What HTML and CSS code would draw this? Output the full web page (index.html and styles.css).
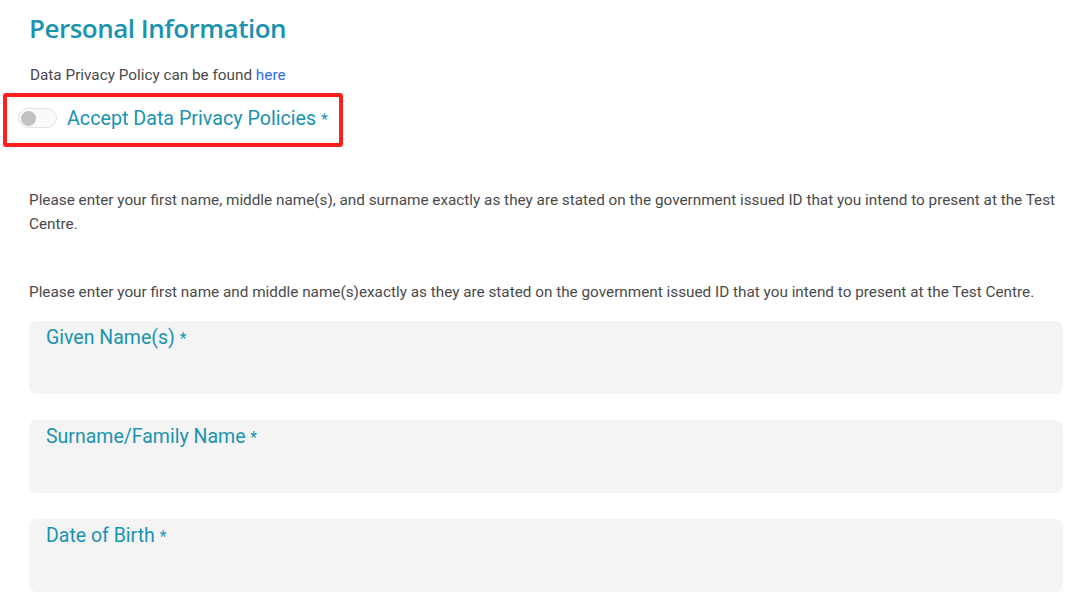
FILE: index.html
```html
<!DOCTYPE html>
<html lang="en">
    <head>
        <link rel="stylesheet" href="styles.css">
    </head>
    <body>
        <div class="container">
            <h1 class="title">Personal Information</h1>
            <p class="policy">Data Privacy Policy can be found <a href="#">here</a></p>

            <div class="consent">
                <span class="toggle"><span class="knob"></span></span>
                <span class="consent-label">Accept Data Privacy Policies <span class="req">*</span></span>
            </div>

            <p class="note first">Please enter your first name, middle name(s), and surname exactly as they are stated on the government issued ID that you intend to present at the Test Centre.</p>
            <p class="note">Please enter your first name and middle name(s)exactly as they are stated on the government issued ID that you intend to present at the Test Centre.</p>

            <div class="fields">
                <div class="field"><label>Given Name(s) <span class="req">*</span></label></div>
                <div class="field"><label>Surname/Family Name <span class="req">*</span></label></div>
                <div class="field"><label>Date of Birth <span class="req">*</span></label></div>
            </div>
        </div>
    </body>
</html>
```

FILE: styles.css
```css
body {
    background-color: white;
    padding: 0px;
    margin: 0px;
    font-family: Roboto, "Liberation Sans", sans-serif;
    color: #4a4a4a;
}

.container {
    padding: 0 17px 0 29px;
}

.title {
    font-family: "Open Sans", Lato, sans-serif;
    font-weight: 550;
    font-size: 26px;
    letter-spacing: -0.5px;
    color: #1a93b0;
    margin: 0;
    padding-top: 11px;
    line-height: 34px;
}

.policy {
    font-size: 15.3px;
    margin: 21px 0 0 1px;
    line-height: 18px;
}

.policy a {
    color: #2f6cf0;
    text-decoration: none;
}

.consent {
    display: flex;
    align-items: center;
    gap: 10px;
    margin: 9px 0 0 -26px;
    width: 340px;
    height: 54px;
    box-sizing: border-box;
    border: 4px solid #ff1f1f;
    border-radius: 3px;
    padding-left: 11px;
    padding-bottom: 4px;
}

.toggle {
    display: flex;
    align-items: center;
    width: 39px;
    height: 20px;
    box-sizing: border-box;
    border: 1px solid #e2e2e2;
    border-radius: 10px;
    padding-left: 2px;
    background: #fafafa;
}

.knob {
    width: 15px;
    height: 15px;
    border-radius: 50%;
    background: #c2c2c2;
}

.consent-label {
    font-size: 19.7px;
    color: #1a93b0;
}

.req {
    font-size: 0.8em;
}

.note {
    font-size: 15.3px;
    line-height: 24px;
    margin: 0;
}

.note.first {
    margin-top: 41px;
}

.note + .note {
    margin-top: 44px;
}

.fields {
    display: flex;
    flex-direction: column;
    gap: 26px;
    margin-top: 17px;
}

.field {
    height: 73px;
    box-sizing: border-box;
    background: #f4f4f4;
    border-radius: 8px;
    padding: 5px 17px;
}

.field label {
    font-size: 19.5px;
    color: #1a93b0;
}
```
